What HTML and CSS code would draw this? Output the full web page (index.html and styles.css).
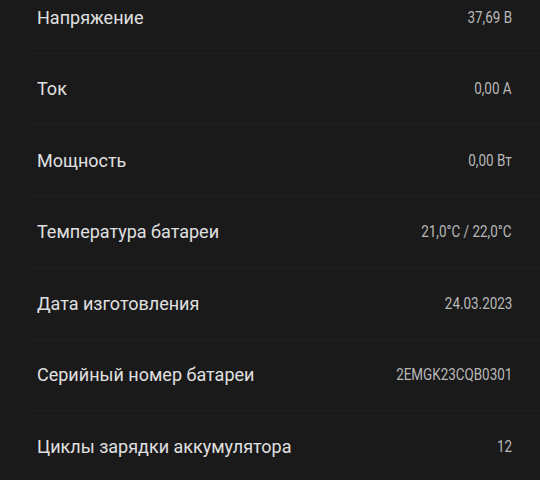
FILE: index.html
```html
<!DOCTYPE html>
<html lang="ru">
<head>
<meta charset="utf-8">
<link rel="stylesheet" href="styles.css">
</head>
<body>
<div class="list">
  <div class="row"><span class="label">Напряжение</span><span class="value">37,69 В</span></div>
  <div class="row"><span class="label">Ток</span><span class="value">0,00 А</span></div>
  <div class="row"><span class="label">Мощность</span><span class="value">0,00 Вт</span></div>
  <div class="row"><span class="label">Температура батареи</span><span class="value">21,0°C / 22,0°C</span></div>
  <div class="row"><span class="label">Дата изготовления</span><span class="value">24.03.2023</span></div>
  <div class="row"><span class="label">Серийный номер батареи</span><span class="value">2EMGK23CQB0301</span></div>
  <div class="row"><span class="label">Циклы зарядки аккумулятора</span><span class="value">12</span></div>
</div>
</body>
</html>
```
FILE: styles.css
```css
html, body {
  margin: 0;
  padding: 0;
  background: #1a1a1a;
  height: 100%;
  overflow: hidden;
}
.list {
  margin-top: -18px;
  display: flex;
  flex-direction: column;
}
.row {
  height: 71.5px;
  box-sizing: border-box;
  margin-left: 33px;
  padding-left: 4px;
  padding-right: 28px;
  display: flex;
  align-items: center;
  justify-content: space-between;
  border-bottom: 1px solid #202020;
}
.label {
  font-family: Roboto, "Noto Sans", sans-serif;
  font-size: 18px;
  color: #e0e0e0;
}
.value {
  display: inline-block;
  font-family: Roboto, "Noto Sans", sans-serif;
  font-size: 16px;
  color: #b9b9b9;
  transform: scaleX(0.84);
  transform-origin: right center;
  white-space: nowrap;
}
```
